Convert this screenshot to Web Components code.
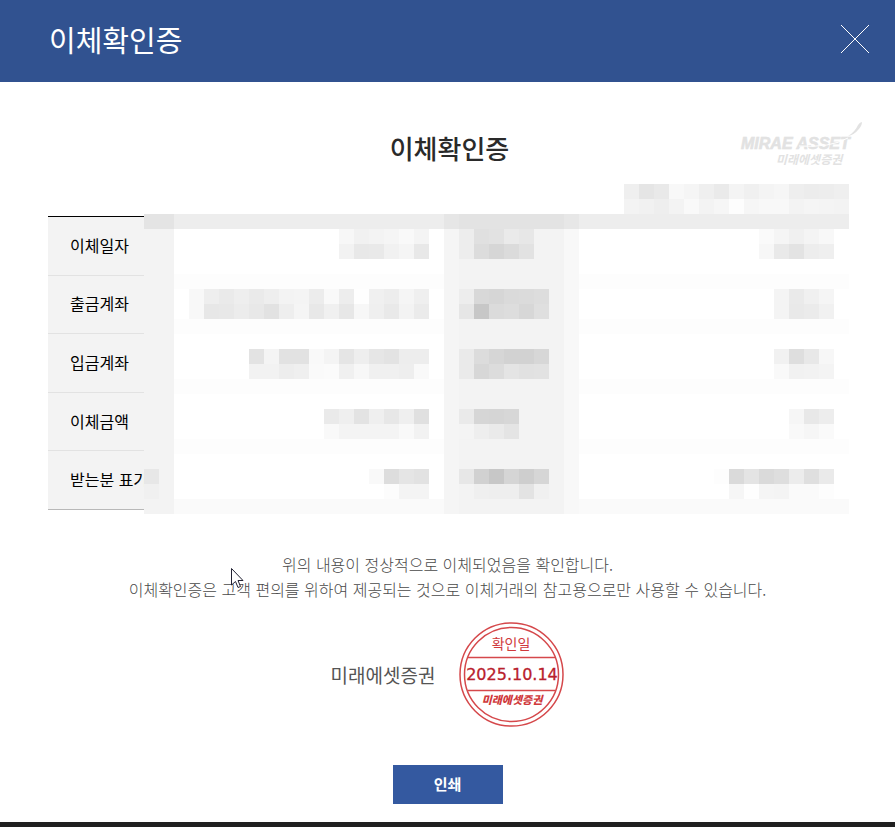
<!DOCTYPE html>
<html lang="ko">
<head>
<meta charset="utf-8">
<meta name="viewport" content="width=device-width, initial-scale=1">
<title>이체확인증</title>
<style>
    body{
        margin: 0;
        font-family: "Noto Sans CJK KR", "Liberation Sans", sans-serif;
        color: #000;
        background: #fff;
    }
</style>
</head>
<body>

<transfer-page>
    <popup-header>이체확인증</popup-header>
    <sheet-title>이체확인증</sheet-title>
    <transfer-table></transfer-table>
    <sheet-notice>
        <span>위의 내용이 정상적으로 이체되었음을 확인합니다.</span>
        <span slot="more">이체확인증은 고객 편의를 위하여 제공되는 것으로 이체거래의 참고용으로만 사용할 수 있습니다.</span>
    </sheet-notice>
    <company-seal date="2025.10.14">미래에셋증권</company-seal>
    <print-button>인쇄</print-button>
</transfer-page>

<script>
function attach(element, html){
    const template = document.createElement('template');
    template.innerHTML = html;
    element.attachShadow({mode:'open'});
    element.shadowRoot.appendChild(template.content.cloneNode(true));
}

class TransferPage extends HTMLElement{
    constructor(){
        super();
        attach(this, `
            <style>
                :host{
                    display: flex;
                    flex-direction: column;
                    box-sizing: border-box;
                    min-height: 100vh;
                    border-bottom: 5px solid #202020;
                }
            </style>
            <slot></slot>
        `);
    }
}

class PopupHeader extends HTMLElement{
    constructor(){
        super();
        attach(this, `
            <style>
                :host{
                    display: flex;
                    justify-content: space-between;
                    align-items: center;
                    box-sizing: border-box;
                    height: 82px;
                    padding: 0 25px 4px 49px;
                    background: #315290;
                    color: #fff;
                }
                h1{
                    margin: 0;
                    font-size: 29px;
                    line-height: 40px;
                    font-weight: 400;
                }
                button{
                    display: flex;
                    padding: 0;
                    border: 0;
                    background: none;
                    cursor: pointer;
                }
            </style>
            <h1><slot></slot></h1>
            <button type="button">
                <svg width="30" height="30" viewBox="0 0 30 30" fill="none" stroke="#fff" stroke-width="1">
                    <path d="M1 1L29 29M29 1L1 29"/>
                </svg>
            </button>
        `);
    }
}

class MiraeLogo extends HTMLElement{
    constructor(){
        super();
        attach(this, `
            <style>
                :host{
                    display: block;
                }
                svg{
                    display: block;
                }
            </style>
            <svg width="124" height="46" viewBox="0 0 124 46" fill="#e2e2e2">
                <text x="2" y="27" font-family="Liberation Sans" font-size="16" font-weight="700" font-style="italic" stroke="#e2e2e2" stroke-width=".6">MIRAE ASSET</text>
                <text x="37" y="42" font-family="Noto Sans CJK KR" font-size="12" font-weight="700" font-style="italic">미래에셋증권</text>
                <path d="M60 24Q91 26 109 16" fill="none" stroke="#fff" stroke-width="1"/>
                <path d="M109 14Q116 10 119 3Q121 0 123 0Q123 4 119 8Q115 13 109 14Z"/>
            </svg>
        `);
    }
}

class SheetTitle extends HTMLElement{
    constructor(){
        super();
        attach(this, `
            <style>
                :host{
                    display: grid;
                    grid-template-columns: 1fr auto 1fr;
                    padding: 40px 32px 0 36px;
                }
                h2{
                    grid-column: 2;
                    align-self: end;
                    margin: 0;
                    padding-bottom: 2px;
                    font-size: 26px;
                    line-height: 36px;
                    font-weight: 500;
                    color: #2a2a2a;
                }
                mirae-logo{
                    justify-self: end;
                }
            </style>
            <h2><slot></slot></h2>
            <mirae-logo></mirae-logo>
        `);
    }
}

// Grey tiles that cover private values. Each run is [row, column, hex greys].
const ISSUE_TILES = [
    [0, 0, 'ef e5 e9 f8 f5 ef ea f4 f0 f4 f6 ee ec ed ef'],
    [1, 0, 'f3 f1 ee f3 f9 f3 f6 fd f6 f8 f8 f3 f5 f4 f3']
];

const VALUE_TILES = [
    [1, 13, 'f7 f1 f3 f5 f9 f4'], [1, 21, 'ed e0 e2 ea e7'], [1, 41, 'fa f5 f0 f4 f8'],
    [2, 13, 'f2 e8 e9 f1 f5 e8'], [2, 21, 'ed dc d6 db e2'], [2, 41, 'f7 e9 e3 ed ef'],
    [5, 3, 'f8 ee ea ee ea ee f3 f4 ec f9 ed fe f0 ed f5 ef'], [5, 21, 'ed d8 d6 da db dd'], [5, 42, 'f4 ea f0 f5'],
    [6, 3, 'f8 e7 e8 ec e8 e2 ee f5 e8 f0 e7 f7 ef e9 f3 eb'], [6, 21, 'e6 c7 db dd d7 df'], [6, 42, 'f4 e9 eb f1'],
    [9, 7, 'e3 f4 e2 e2 f9 f4 e5 ee e6 e3 ed ed'], [9, 21, 'ea dc d6 d2 d2 d7'], [9, 42, 'f1 de e8 f7'],
    [10, 7, 'f2 f2 ed ef fa fb f0 f7 f0 f0 ee f9'], [10, 21, 'ea d7 dc e4 e1 e2'], [10, 42, 'f9 f1 f2 f4'],
    [13, 12, 'ea ef e3 ef e7 ef e0'], [13, 21, 'ea d6 d5 d7'], [13, 43, 'f6 e8 ed'],
    [14, 12, 'f9 f4 f4 f4 f4 f9 f2'], [14, 21, 'f4 ee ea e4'], [14, 43, 'f9 f6 fa'],
    [17, 0, 'e7'], [17, 15, 'f9 dd e5 e2'], [17, 21, 'e7 d1 c7 d5 ce d6'], [17, 38, 'fd da e4 da de ec df ea'],
    [18, 0, 'f0'], [18, 16, 'fc f4 f4'], [18, 21, 'f3 ef ee ee e3 f0'], [18, 39, 'f6 fe f5 f4 fa fa fd']
];

const VALUE_BANDS = [
    // x, y, width, height, grey
    [0, 0, 47, 20, 'ff'],
    [0, 4, 47, 1, 'fd'], [0, 7, 47, 1, 'fd'], [0, 11, 47, 1, 'fd'], [0, 15, 47, 1, 'fd'], [0, 19, 47, 1, 'fa'],
    [0, 0, 2, 20, 'f3'], [20, 0, 1, 20, 'f5'], [21, 0, 7, 20, 'f3'], [28, 0, 1, 20, 'f8'],
    [0, 0, 47, 1, 'ed'], [0, 0, 2, 1, 'e4'], [20, 0, 1, 1, 'e6'], [21, 0, 7, 1, 'e3'], [28, 0, 1, 1, 'e7']
];

class PixelMask extends HTMLElement{
    constructor(){
        super();
        attach(this, `
            <style>
                :host{
                    display: block;
                }
                svg{
                    display: block;
                    width: 100%;
                    height: 100%;
                }
            </style>
            <svg preserveAspectRatio="none" shape-rendering="crispEdges"></svg>
        `);
    }

    rect(x, y, width, height, grey){
        return `<rect x="${x}" y="${y}" width="${width}" height="${height}" fill="#${grey}${grey}${grey}"/>`;
    }

    connectedCallback(){
        const full = this.getAttribute('kind') === 'values';
        const svg = this.shadowRoot.querySelector('svg');
        let out = '';

        if(full){
            VALUE_BANDS.forEach(band => out += this.rect(...band));
        }
        (full ? VALUE_TILES : ISSUE_TILES).forEach(([row, column, greys]) => {
            greys.split(' ').forEach((grey, i) => out += this.rect(column + i, row, 1, 1, grey));
        });
        svg.setAttribute('viewBox', full ? '0 0 47 20' : '0 0 15 2');
        svg.innerHTML = out;
    }
}

class TransferTable extends HTMLElement{
    constructor(){
        super();
        const labels = ['이체일자', '출금계좌', '입금계좌', '이체금액', '받는분 표기'];
        attach(this, `
            <style>
                :host{
                    display: flex;
                    flex-direction: column;
                    gap: 2px;
                    padding: 16px 46px 0 48px;
                }
                .issued{
                    align-self: flex-end;
                    width: 225px;
                    height: 30px;
                }
                .sheet{
                    position: relative;
                }
                table{
                    width: 100%;
                    height: 294px;
                    table-layout: fixed;
                    border-spacing: 0;
                    border-top: 1px solid #000;
                }
                th, td{
                    padding: 0 0 2px;
                    border-bottom: 1px solid #e2e2e2;
                }
                th{
                    width: 104px;
                    padding-left: 22px;
                    background: #f3f3f3;
                    font-size: 16px;
                    line-height: 24px;
                    font-weight: 400;
                    text-align: left;
                    white-space: nowrap;
                }
                tr:last-child > *{
                    border-bottom-color: #b8b8b8;
                }
                .values{
                    position: absolute;
                    inset: -2px 0 -4px 96px;
                }
            </style>
            <pixel-mask class="issued"></pixel-mask>
            <div class="sheet">
                <table>
                    ${labels.map(label => `<tr><th scope="row">${label}</th><td></td><th scope="row"></th><td></td></tr>`).join('')}
                </table>
                <pixel-mask class="values" kind="values"></pixel-mask>
            </div>
        `);
    }
}

class SheetNotice extends HTMLElement{
    constructor(){
        super();
        attach(this, `
            <style>
                :host{
                    display: block;
                    position: relative;
                    padding: 42px 16px 0;
                    text-align: center;
                    color: #4a4a4a;
                }
                p{
                    margin: 0;
                    font-size: 16px;
                    line-height: 25px;
                    font-weight: 300;
                }
                .pointer{
                    position: absolute;
                    left: 231px;
                    top: 58px;
                }
            </style>
            <p><slot></slot></p>
            <p><slot name="more"></slot></p>
            <svg class="pointer" width="13" height="21" viewBox="0 0 13 21">
                <path d="M.5 .5V17L4.500 13.500L7 19.500L9.500 18.500L7 12.500H12Z" fill="#fff" stroke="#223" stroke-width="1"/>
            </svg>
        `);
    }
}

class CompanySeal extends HTMLElement{
    constructor(){
        super();
        attach(this, `
            <style>
                :host{
                    display: flex;
                    justify-content: center;
                    align-items: center;
                    gap: 24px;
                    padding-top: 20px;
                    font-size: 19px;
                    line-height: 28px;
                    color: #555;
                }
                svg{
                    display: block;
                }
            </style>
            <span><slot></slot></span>
            <svg width="105" height="105" viewBox="0 0 105 105" fill="#d0393c" text-anchor="middle" font-family="Noto Sans CJK KR">
                <g fill="none" stroke="#d5484b">
                    <circle cx="52.500" cy="52.500" r="51.500" stroke-width="1.500"/>
                    <circle cx="52.500" cy="52.500" r="47" stroke-width="1.500"/>
                    <path d="M9 35.500H96M9 68.500H96" stroke-width="1.500"/>
                </g>
                <text x="52" y="27" font-size="14">확인일</text>
                <text id="date" x="53" y="58" font-family="DejaVu Sans" font-size="16" fill="#b9202c" stroke="#b9202c" stroke-width=".3"></text>
                <text x="53" y="82" font-size="11" font-weight="900" font-style="italic">미래에셋증권</text>
            </svg>
        `);
    }

    connectedCallback(){
        this.shadowRoot.querySelector('#date').textContent = this.getAttribute('date');
    }
}

class PrintButton extends HTMLElement{
    constructor(){
        super();
        attach(this, `
            <style>
                :host{
                    display: flex;
                    justify-content: center;
                    padding: 38px 0 18px;
                }
                button{
                    width: 110px;
                    height: 39px;
                    padding: 0 0 2px;
                    border: 0;
                    background: #3459a0;
                    color: #fff;
                    font-family: inherit;
                    font-size: 15px;
                    font-weight: 700;
                    cursor: pointer;
                }
            </style>
            <button type="button"><slot></slot></button>
        `);
        this.shadowRoot.querySelector('button').addEventListener('click', () => window.print());
    }
}

window.customElements.define('pixel-mask', PixelMask);
window.customElements.define('mirae-logo', MiraeLogo);
window.customElements.define('popup-header', PopupHeader);
window.customElements.define('sheet-title', SheetTitle);
window.customElements.define('transfer-table', TransferTable);
window.customElements.define('sheet-notice', SheetNotice);
window.customElements.define('company-seal', CompanySeal);
window.customElements.define('print-button', PrintButton);
window.customElements.define('transfer-page', TransferPage);
</script>
</body>
</html>
